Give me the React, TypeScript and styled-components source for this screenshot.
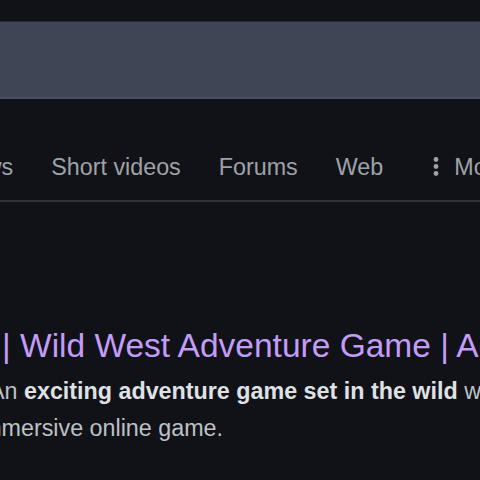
import React from "react";
import styled, { createGlobalStyle } from "styled-components";

const Global = createGlobalStyle`
  html, body { margin: 0; padding: 0; background: #111217; overflow: hidden; }
  body { font-family: Arial, "Liberation Sans", sans-serif; width: 480px; height: 480px; }
`;

const Page = styled.div`
  width: 480px;
  height: 480px;
  overflow: hidden;
  background: #111217;
  display: flex;
  flex-direction: column;
  padding-top: 21px;
  box-sizing: border-box;
`;

const SearchBar = styled.div`
  height: 78px;
  background: #3f4555;
  border-top: 1px solid #272a33;
  border-bottom: 2px solid #4a5062;
  box-sizing: border-box;
  margin-left: -20px;
  margin-right: -20px;
`;

const Tabs = styled.nav`
  display: flex;
  align-items: center;
  gap: 38px;
  margin-left: -45px;
  height: 103px;
  border-bottom: 2px solid #2f3238;
  box-sizing: border-box;
  padding-top: 35px;
  white-space: nowrap;
`;

const Tab = styled.span`
  font-family: Arial, "Liberation Sans", sans-serif;
  font-size: 23.3px;
  color: #9ea2a8;
  display: inline-flex;
  align-items: center;
  flex-shrink: 0;
`;

const Dots = styled.svg`
  width: 30px;
  height: 30px;
  margin-right: 3px;
`;

const Result = styled.div`
  display: flex;
  flex-direction: column;
  padding-top: 124px;
  white-space: nowrap;
`;

const Title = styled.div`
  font-family: Arial, "Liberation Sans", sans-serif;
  font-size: 33.5px;
  line-height: 40px;
  color: #c39cf8;
  margin-left: 2px;
`;

const Snippet = styled.div`
  font-family: Arial, "Liberation Sans", sans-serif;
  font-size: 23.3px;
  line-height: 37px;
  color: #bdc1c6;
  margin-top: 7px;
  b { color: #dfe1e5; font-weight: 700; }
`;

const Line = styled.div<{ $indent: number }>`
  margin-left: ${(p) => p.$indent}px;
`;

export default function App() {
  return (
    <>
      <Global />
      <Page>
        <SearchBar />
        <Tabs>
          <Tab>News</Tab>
          <Tab>Short videos</Tab>
          <Tab>Forums</Tab>
          <Tab>Web</Tab>
          <Tab>
            <Dots viewBox="0 0 30 30">
              <circle cx="15" cy="7.5" r="2.4" fill="#9ea2a8" />
              <circle cx="15" cy="14.5" r="2.4" fill="#9ea2a8" />
              <circle cx="15" cy="21.5" r="2.4" fill="#9ea2a8" />
            </Dots>
            More
          </Tab>
        </Tabs>
        <Result>
          <Title>| Wild West Adventure Game | Adventure</Title>
          <Snippet>
            <Line $indent={-11}>
              An <b>exciting adventure game set in the wild</b> west
            </Line>
            <Line $indent={-23}>immersive online game.</Line>
          </Snippet>
        </Result>
      </Page>
    </>
  );
}
